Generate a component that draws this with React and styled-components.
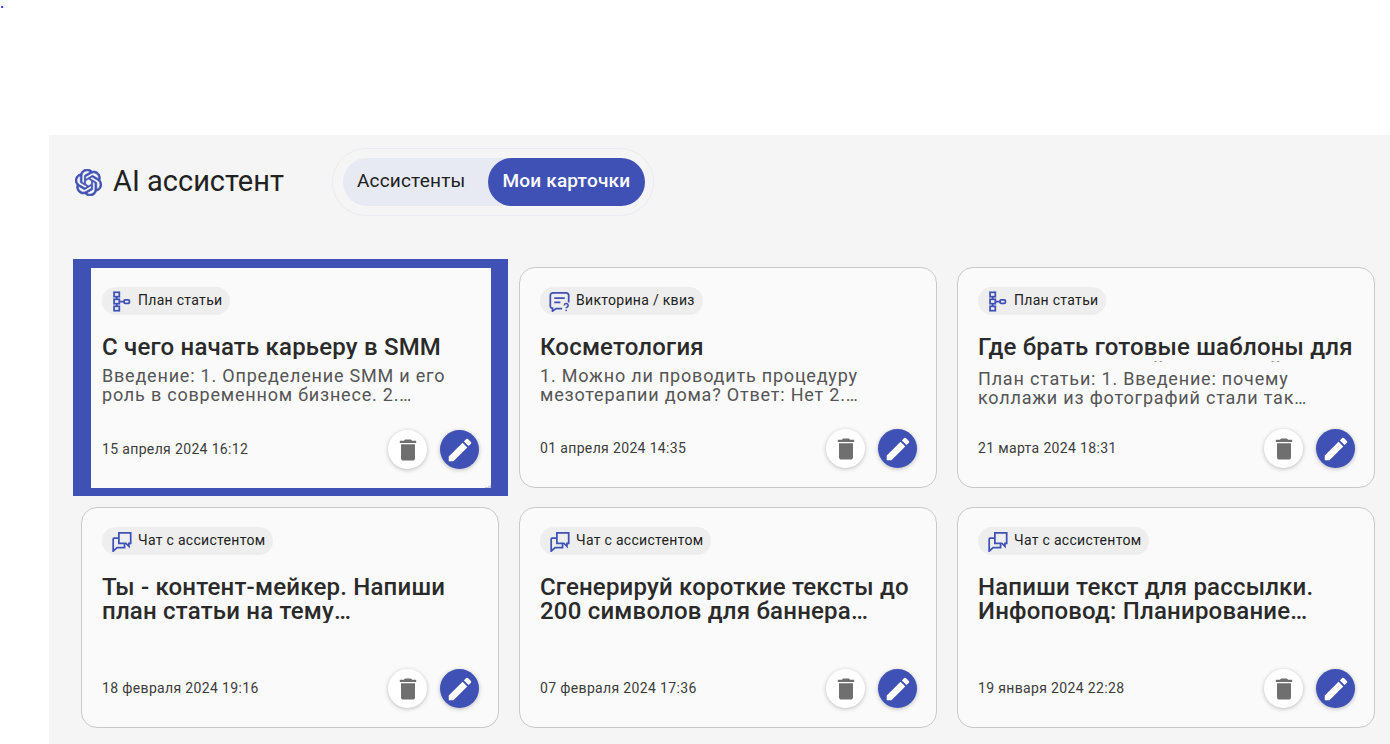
import styled, { createGlobalStyle } from "styled-components";
import { MdDelete, MdEdit } from "react-icons/md";
import { SiOpenai } from "react-icons/si";

const GlobalStyle = createGlobalStyle`
  html, body {
    margin: 0;
    background: #fff;
    font-family: Roboto, "Liberation Sans", sans-serif;
    color: #212121;
  }
  * { box-sizing: border-box; }
`;

const Page = styled.div`
  height: 744px;
  display: flex;
  flex-direction: column;
  overflow: hidden;
`;
const TopBar = styled.div`
  height: 135px;
  flex-shrink: 0;
`;
const TopLink = styled.a`
  display: block;
  font-family: "Liberation Serif", serif;
  font-size: 16px;
  line-height: 5px;
  height: 5px;
  color: #0000ee;
  text-decoration: none;
`;
const Panel = styled.main`
  flex: 1;
  margin-left: 49px;
  background: #f5f5f5;
  padding: 13px 15px 0 32px;
`;
const Header = styled.header`
  display: flex;
  align-items: center;
  margin-left: -6px;
`;
const Logo = styled.div`
  display: flex;
  color: #3f51b5;
  margin-right: 11px;

  svg {
    stroke: currentColor;
    stroke-width: 0.6;
  }
`;
const PageTitle = styled.h1`
  margin: -2px 48px 0 0;
  font-size: 29px;
  line-height: 36px;
  font-weight: 400;
  color: #212121;
`;
const TabsFrame = styled.div`
  border: 1px solid #ebebf1;
  border-radius: 34px;
  padding: 9px 8px 9px 10px;
`;
const Tabs = styled.div`
  display: flex;
  height: 48px;
  background: #e8eaf3;
  border-radius: 24px;
`;
const Tab = styled.button`
  border: 0;
  padding: 0 ${(p) => (p.$active ? "15px" : "14px")} 3px 14px;
  border-radius: 24px;
  font-family: inherit;
  font-size: 19px;
  letter-spacing: 0.2px;
  font-weight: ${(p) => (p.$active ? 500 : 400)};
  background: ${(p) => (p.$active ? "#3f51b5" : "transparent")};
  color: ${(p) => (p.$active ? "#fff" : "#212121")};
  margin-right: ${(p) => (p.$active ? 0 : "9px")};
`;
const Grid = styled.section`
  display: grid;
  grid-template-columns: repeat(3, 418px);
  grid-auto-rows: 221px;
  column-gap: 20px;
  row-gap: 19px;
  margin-top: 51px;
`;
const Card = styled.article`
  position: relative;
  display: flex;
  flex-direction: column;
  background: #fafafa;
  border: 1px solid #c9c9cc;
  border-radius: 16px;
  padding: 19px 19px 19px 20px;
  ${(p) =>
    p.$selected &&
    `
    border-radius: 0;
    border-color: #3f51b5;
    border-width: 1px 8px 0 10px;
    padding-left: 11px;
    padding-right: 12px;
    box-shadow: 0 0 0 8px #3f51b5, 1px 0 0 8px #3f51b5;

    &::after {
      content: "";
      position: absolute;
      right: 0;
      bottom: 0;
      width: 7px;
      height: 3px;
      background: linear-gradient(to bottom right, transparent 50%, #cfcfd6 50%);
    }
  `}
`;
const Chip = styled.div`
  align-self: flex-start;
  display: flex;
  align-items: center;
  gap: 6px;
  height: 28px;
  padding: 0 8px 2px 9px;
  border-radius: 14px;
  background: #eeeeee;
  color: #212121;
  font-size: 14px;
  letter-spacing: 0.3px;
`;
const ChipIcon = styled.svg`
  width: 21px;
  height: 21px;
  flex-shrink: 0;
  margin-bottom: -2px;
  fill: none;
  stroke: #3f51b5;
  stroke-width: 2;
`;
const CardTitle = styled.h2`
  margin: 20px 0 0;
  font-size: 24px;
  line-height: 24px;
  font-weight: 500;
  letter-spacing: 0.2px;
  color: #2a2a2a;
  overflow: hidden;
  max-height: ${(p) => (p.$clip ? "27px" : "48px")};
  display: -webkit-box;
  -webkit-box-orient: vertical;
  -webkit-line-clamp: 2;
`;
const CardText = styled.p`
  margin: 7px 0 0;
  font-size: 18px;
  line-height: 19px;
  letter-spacing: 0.8px;
  color: #555;
  display: -webkit-box;
  -webkit-box-orient: vertical;
  -webkit-line-clamp: 2;
  overflow: hidden;
`;
const CardFooter = styled.footer`
  margin-top: auto;
  display: flex;
  align-items: center;
  justify-content: space-between;
`;
const DateText = styled.span`
  padding-bottom: 2px;
  font-size: 14px;
  font-weight: 400;
  letter-spacing: 0.35px;
  color: #3c3c3c;
`;
const Actions = styled.div`
  display: flex;
  gap: 13px;
`;
const RoundButton = styled.button`
  width: 39px;
  height: 39px;
  padding: 0;
  border: 0;
  border-radius: 50%;
  display: flex;
  align-items: center;
  justify-content: center;
  background: ${(p) => (p.$primary ? "#3f51b5" : "#fff")};
  color: ${(p) => (p.$primary ? "#fff" : "#6f6f6f")};
  box-shadow: 0 1px 4px rgba(0, 0, 0, 0.25);
`;

const PlanIcon = () => (
  <ChipIcon viewBox="0 0 24 24">
    <rect x="3.500" y="1.500" width="6" height="5" />
    <rect x="3.500" y="9.500" width="6" height="5" />
    <rect x="3.500" y="17.500" width="6" height="5" />
    <rect x="15" y="10" width="6" height="4" rx="1" />
    <path d="M6.500 6.500v3M6.500 14.500v3M9.500 12H15" />
  </ChipIcon>
);

const QuizIcon = () => (
  <ChipIcon viewBox="0 0 24 24">
    <path d="M15 20H8l-4 3v-3.500A2.500 2.500 0 0 1 1.500 17V5A3 3 0 0 1 4.500 2h15a3 3 0 0 1 3 3v8" />
    <path d="M6 8h12M6 13h7" />
    <path d="M17.500 16.500a2.200 2.200 0 1 1 3 2c-.5.2-.8.5-.8 1.200" strokeWidth="1.800" />
    <path d="M19.700 21.300v1.700" strokeWidth="1.800" />
  </ChipIcon>
);

const ChatIcon = () => (
  <ChipIcon viewBox="0 0 24 24">
    <path d="M9 2h13.500v12h-2v3.500L17 14H9z" />
    <path d="M9 8H3.500a1 1 0 0 0-1 1v14l4.500-4h8.500v-5" />
  </ChipIcon>
);

const cards = [
  {
    icon: PlanIcon,
    kind: "План статьи",
    title: "С чего начать карьеру в SMM",
    text: "Введение: 1. Определение SMM и его роль в современном бизнесе. 2. Основные обязанности специалиста",
    date: "15 апреля 2024 16:12",
    selected: true,
  },
  {
    icon: QuizIcon,
    kind: "Викторина / квиз",
    title: "Косметология",
    text: "1. Можно ли проводить процедуру мезотерапии дома? Ответ: Нет 2. Витамин для кожи",
    date: "01 апреля 2024 14:35",
  },
  {
    icon: PlanIcon,
    kind: "План статьи",
    title: "Где брать готовые шаблоны для ярких коллажей и галерей",
    text: "План статьи: 1. Введение: почему коллажи из фотографий стали так популярны в социальных сетях",
    date: "21 марта 2024 18:31",
  },
  {
    icon: ChatIcon,
    kind: "Чат с ассистентом",
    title: "Ты - контент-мейкер. Напиши план статьи на тему Продвижение в социальных сетях",
    date: "18 февраля 2024 19:16",
  },
  {
    icon: ChatIcon,
    kind: "Чат с ассистентом",
    title: "Сгенерируй короткие тексты до 200 символов для баннера рекламного сайта",
    date: "07 февраля 2024 17:36",
  },
  {
    icon: ChatIcon,
    kind: "Чат с ассистентом",
    title: "Напиши текст для рассылки. Инфоповод: Планирование бюджета на следующий год",
    date: "19 января 2024 22:28",
  },
];

const AssistantCard = ({ card }) => {
  const Icon = card.icon;
  return (
    <Card $selected={card.selected}>
      <Chip>
        <Icon />
        {card.kind}
      </Chip>
      <CardTitle $clip={!!card.text}>{card.title}</CardTitle>
      {card.text && <CardText>{card.text}</CardText>}
      <CardFooter>
        <DateText>{card.date}</DateText>
        <Actions>
          <RoundButton>
            <MdDelete size={28} />
          </RoundButton>
          <RoundButton $primary>
            <MdEdit size={30} />
          </RoundButton>
        </Actions>
      </CardFooter>
    </Card>
  );
};

export default function App() {
  return (
    <>
      <GlobalStyle />
      <Page>
        <TopBar>
          <TopLink href="#">.</TopLink>
        </TopBar>
        <Panel>
          <Header>
            <Logo>
              <SiOpenai size={27} />
            </Logo>
            <PageTitle>AI ассистент</PageTitle>
            <TabsFrame>
              <Tabs>
                <Tab>Ассистенты</Tab>
                <Tab $active>Мои карточки</Tab>
              </Tabs>
            </TabsFrame>
          </Header>
          <Grid>
            {cards.map((card, i) => (
              <AssistantCard key={i} card={card} />
            ))}
          </Grid>
        </Panel>
      </Page>
    </>
  );
}
